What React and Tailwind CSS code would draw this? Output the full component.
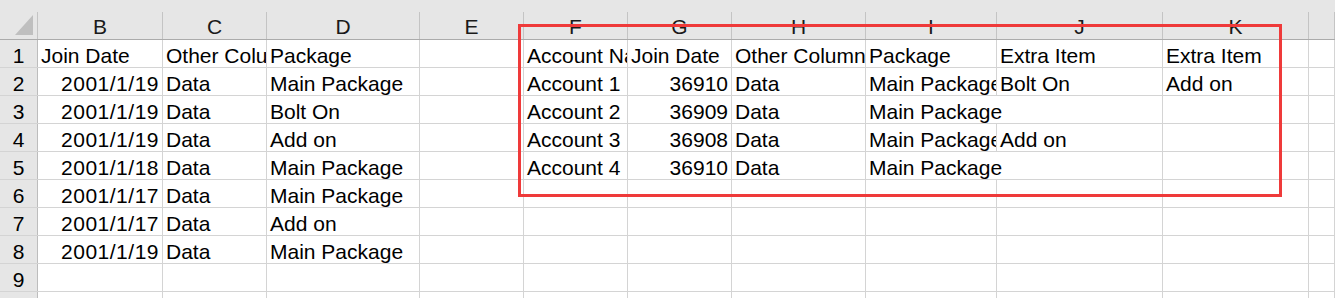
import React from "react";

const columns = [
  { name: "B", cls: "w-[125px]" },
  { name: "C", cls: "w-[104px]" },
  { name: "D", cls: "w-[153px]" },
  { name: "E", cls: "w-[104px]" },
  { name: "F", cls: "w-[104px]" },
  { name: "G", cls: "w-[104px]" },
  { name: "H", cls: "w-[134px]" },
  { name: "I", cls: "w-[131px]" },
  { name: "J", cls: "w-[166px]" },
  { name: "K", cls: "w-[146px]" },
  { name: "", cls: "flex-1" },
];

// each row: 11 cells (B..L); {n} = right aligned number, {t, spill} = text running into the next empty cell
const rows = [
  ["Join Date", "Other Column", "Package", "", "Account Name", "Join Date", "Other Column", "Package", "Extra Item", "Extra Item", ""],
  [{ n: "2001/1/19" }, "Data", "Main Package", "", "Account 1", { n: "36910" }, "Data", "Main Package", "Bolt On", "Add on", ""],
  [{ n: "2001/1/19" }, "Data", "Bolt On", "", "Account 2", { n: "36909" }, "Data", { t: "Main Package", spill: true }, "", "", ""],
  [{ n: "2001/1/19" }, "Data", "Add on", "", "Account 3", { n: "36908" }, "Data", "Main Package", "Add on", "", ""],
  [{ n: "2001/1/18" }, "Data", "Main Package", "", "Account 4", { n: "36910" }, "Data", { t: "Main Package", spill: true }, "", "", ""],
  [{ n: "2001/1/17" }, "Data", "Main Package", "", "", "", "", "", "", "", ""],
  [{ n: "2001/1/17" }, "Data", "Add on", "", "", "", "", "", "", "", ""],
  [{ n: "2001/1/19" }, "Data", "Main Package", "", "", "", "", "", "", "", ""],
  ["", "", "", "", "", "", "", "", "", "", ""],
];

const Cell = ({ value, next, cls }) => {
  const isNum = value && typeof value === "object" && "n" in value;
  const spill = value && typeof value === "object" && value.spill;
  const text = isNum ? value.n : spill ? value.t : value;
  const clip = isNum || (next !== "" && next !== undefined);
  const isDate = isNum && text.includes("/");
  return (
    <div
      className={`${cls} shrink-0 h-full border-r ${spill ? "border-transparent" : "border-[#d4d4d4]"} flex items-end whitespace-nowrap pb-[1px] ${
        clip ? "overflow-hidden" : "overflow-visible"
      } ${isNum ? "justify-end pr-[3px]" : "pl-[3px]"}`}
    >
      <span className={`leading-none ${isDate ? "tracking-[0.5px]" : ""}`}>{text}</span>
    </div>
  );
};

export default function App() {
  return (
    <div
      className="relative w-[1335px] h-[298px] bg-white overflow-hidden text-[21px] text-black"
      style={{ fontFamily: '"Liberation Sans", Arial, sans-serif' }}
    >
      {/* column headers */}
      <div className="flex items-end h-[40px] bg-[#e6e6e6] border-b border-[#ababab]">
        <div className="w-[38px] shrink-0 h-[27px] border-r border-[#c4c4c4]">
          <svg width="37" height="27" className="block">
            <polygon points="33,3 33,23 15,23" fill="#bfbfbf" />
          </svg>
        </div>
        {columns.map((c, i) => (
          <div
            key={i}
            className={`${c.cls} shrink-0 h-[27px] border-r border-[#c4c4c4] flex items-end justify-center pb-[2px] text-[#1a1a1a]`}
          >
            <span className="leading-none">{c.name}</span>
          </div>
        ))}
      </div>

      {/* body rows */}
      {rows.map((row, i) => (
        <div key={i} className="flex h-[28px] border-b border-[#d4d4d4]">
          <div className="w-[38px] shrink-0 h-full bg-[#e6e6e6] border-r border-[#bdbdbd] flex items-end justify-center pb-[1px]">
            <span className="leading-none">{i + 1}</span>
          </div>
          {row.map((v, j) => (
            <Cell key={j} value={v} next={row[j + 1]} cls={columns[j].cls} />
          ))}
        </div>
      ))}
      <div className="flex h-[28px]">
        <div className="w-[38px] shrink-0 h-full bg-[#e6e6e6] border-r border-[#bdbdbd]" />
        {columns.map((c, i) => (
          <div key={i} className={`${c.cls} shrink-0 h-full border-r border-[#d4d4d4]`} />
        ))}
      </div>

      {/* red highlight box over the second table */}
      <div className="absolute left-[518px] top-[24px] w-[764px] h-[173px] border-[3px] border-[#ef3a3a] pointer-events-none" />
    </div>
  );
}
